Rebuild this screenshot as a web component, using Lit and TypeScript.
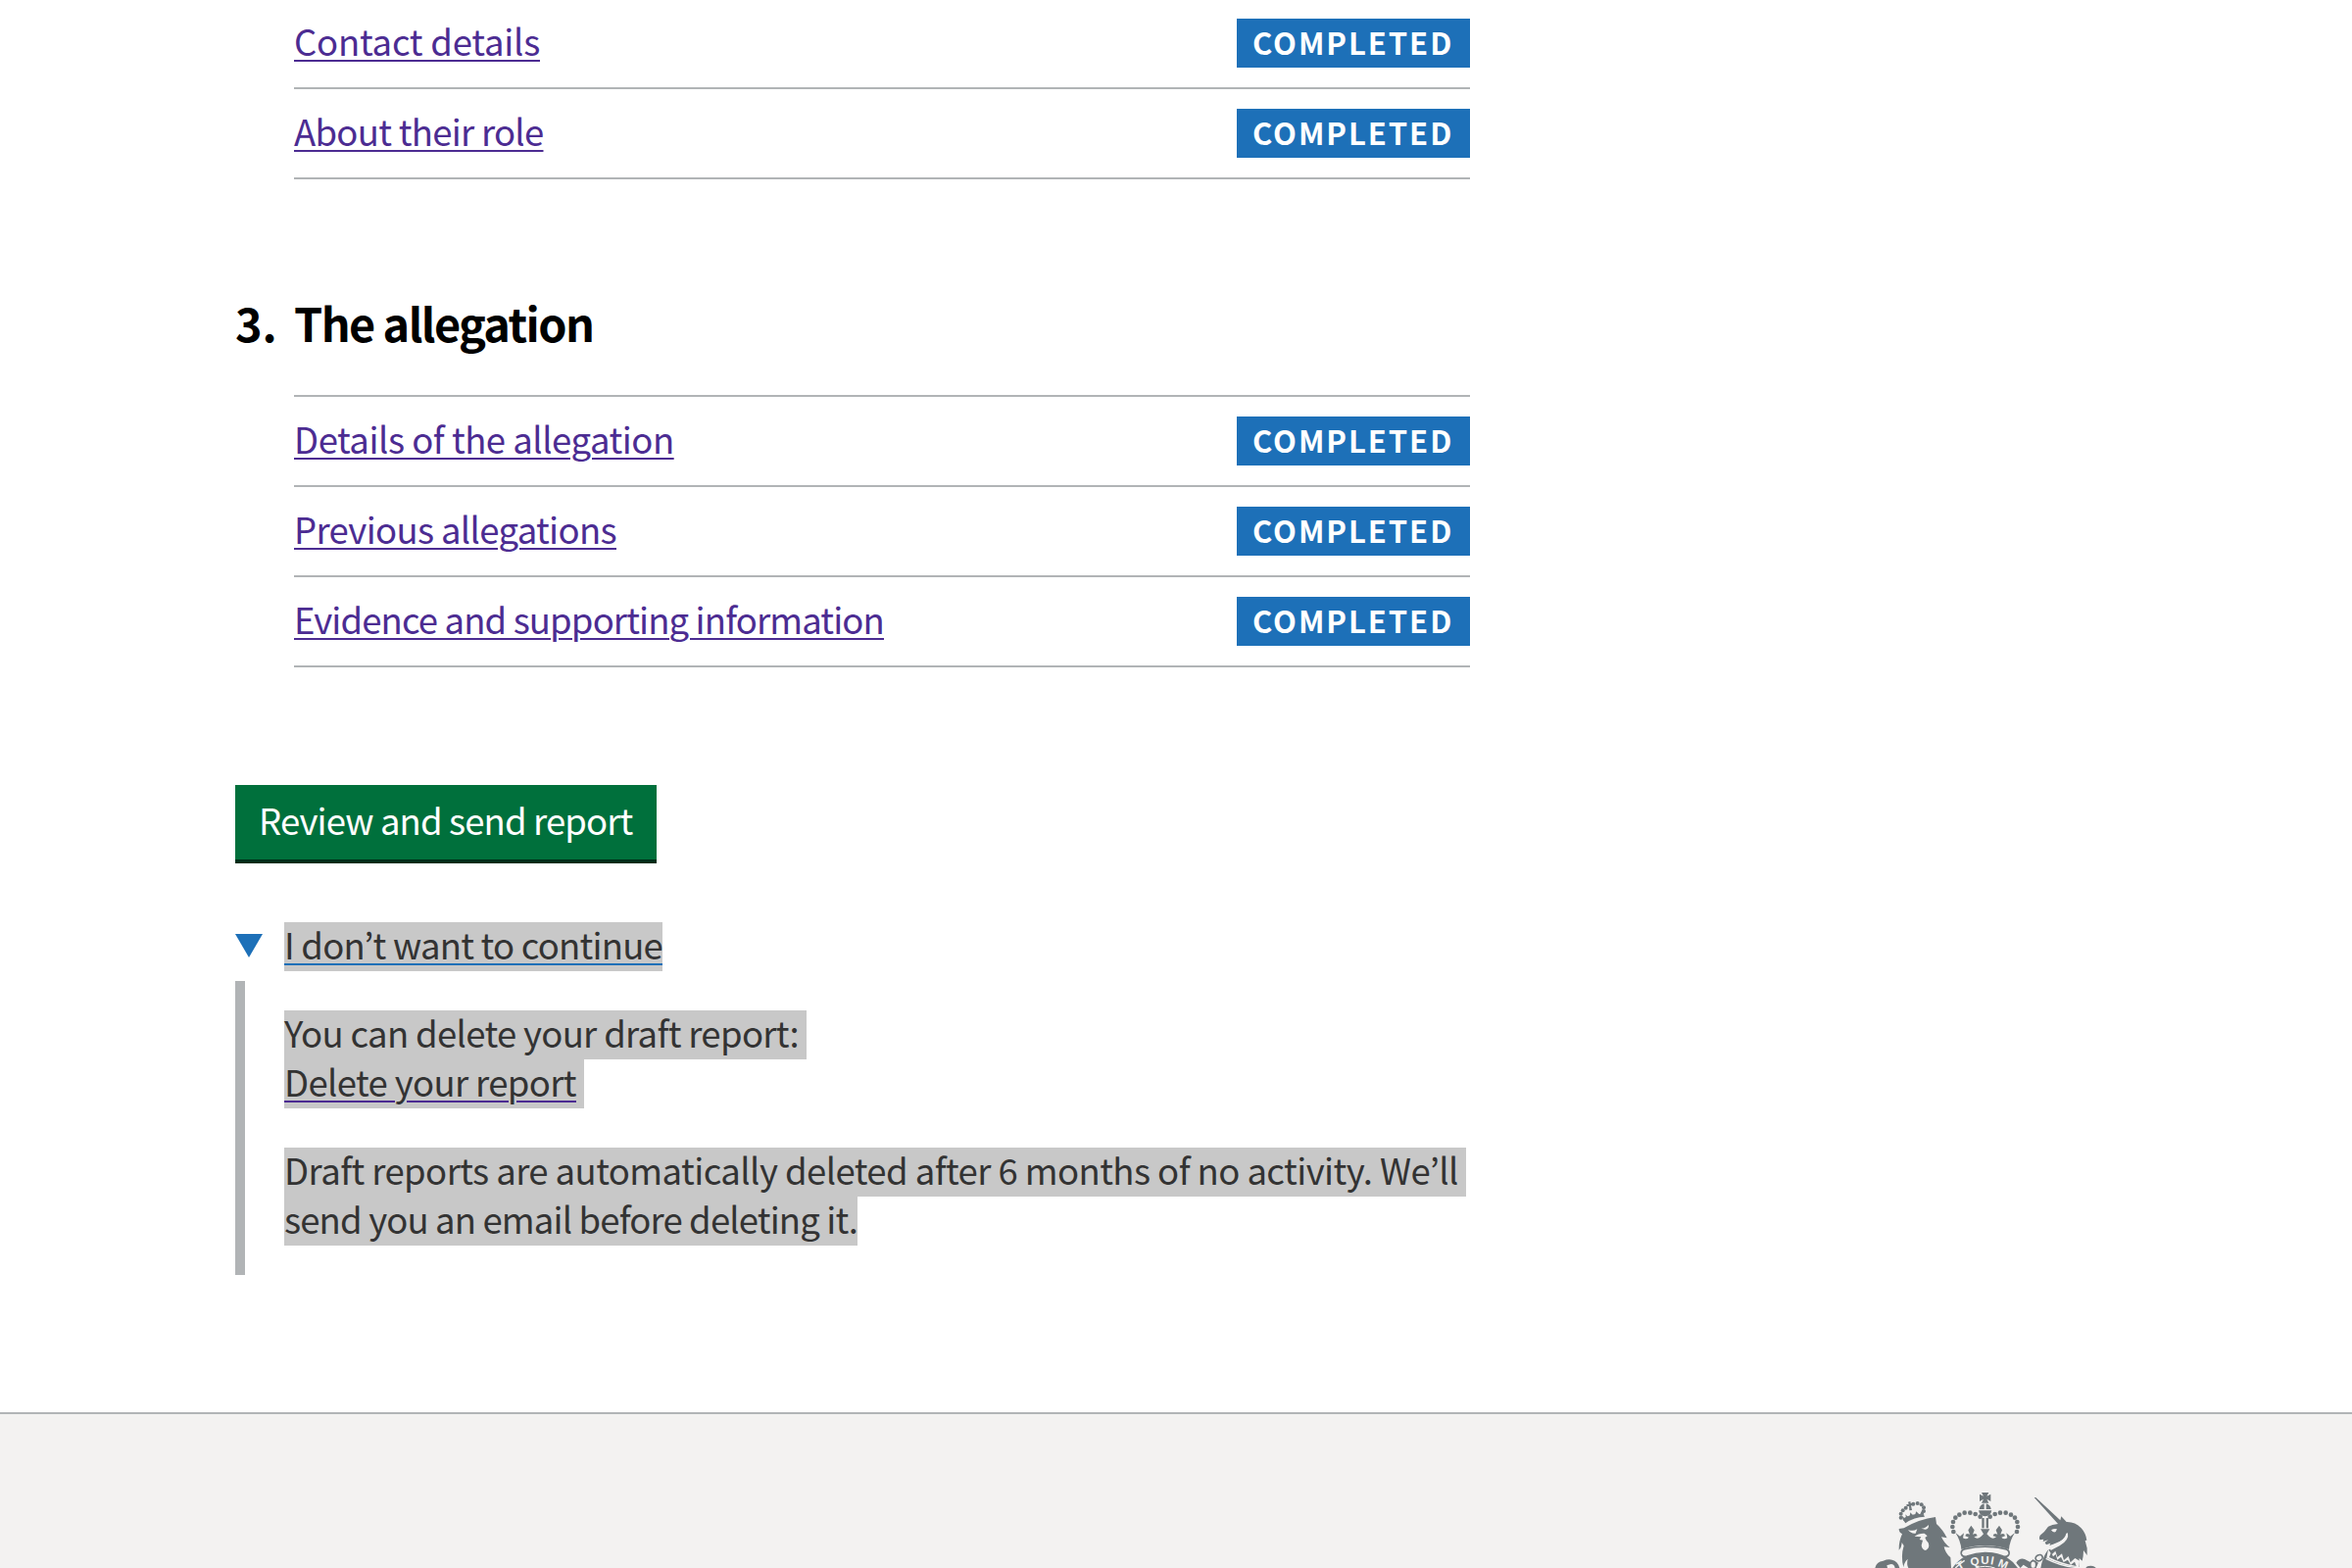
import { LitElement, html, svg, css } from "lit";
import { customElement, property } from "lit/decorators.js";

interface Task {
  label: string;
  tracking: number;
}

const ROLE_TASKS: Task[] = [
  { label: "Contact details", tracking: -0.242 },
  { label: "About their role", tracking: -0.716 },
];

const ALLEGATION_TASKS: Task[] = [
  { label: "Details of the allegation", tracking: -0.481 },
  { label: "Previous allegations", tracking: -0.658 },
  { label: "Evidence and supporting information", tracking: -0.876 },
];

@customElement("task-list")
class TaskList extends LitElement {
  @property({ attribute: false }) tasks: Task[] = [];

  static styles = css`
    :host {
      display: block;
      width: 1200px;
      margin-left: 60px;
    }
    .list {
      list-style: none;
      margin: 0;
      padding: 0;
    }
    .row {
      display: flex;
      justify-content: space-between;
      padding: 20px 0;
      height: 50px;
      border-bottom: 2px solid #b1b4b6;
    }
    .link {
      line-height: 46px;
      color: #4c2c92;
      text-decoration: underline;
      text-decoration-thickness: 2px;
      text-underline-offset: 4px;
      white-space: nowrap;
    }
    .tag {
      box-sizing: border-box;
      width: 238px;
      height: 50px;
      padding-left: 16px;
      background: #1d70b8;
      color: #fff;
      font-size: 31px;
      font-weight: 700;
      line-height: 47px;
      letter-spacing: 1.95px;
      white-space: nowrap;
    }
  `;

  render() {
    return html`<ul class="list">
      ${this.tasks.map(
        (t) => html`<li class="row">
          <a class="link" style="letter-spacing:${t.tracking}px">${t.label}</a>
          <strong class="tag">COMPLETED</strong>
        </li>`
      )}
    </ul>`;
  }
}

const PEARLS = [
  [392, 143], [377, 135], [361, 131], [344, 131], [328, 137],
  [316, 146], [309, 159], [307, 174], [310, 189],
];
const LION_PEARLS = [
  [149, 134], [149, 146], [155, 124], [164, 116], [187, 104], [200, 102], [212, 106], [219, 115], [219, 126],
];

@customElement("royal-arms")
class RoyalArms extends LitElement {
  static styles = css`
    :host {
      display: block;
      width: 270px;
      height: 100px;
    }
    .arms {
      display: block;
    }
    .ink {
      fill: #6f777b;
    }
    .paper {
      fill: #f3f2f1;
    }
    .ink-line {
      fill: none;
      stroke: #6f777b;
    }
    .paper-line {
      fill: none;
      stroke: #f3f2f1;
    }
    .motto {
      fill: #f3f2f1;
      font-family: "Liberation Sans", Arial, sans-serif;
      font-weight: 700;
      font-size: 35px;
    }
  `;

  render() {
    return html`<svg class="arms" width="270" height="100" viewBox="0 0 810 300">
      ${this.lion()} ${this.garter()} ${this.crown()} ${this.unicorn()}
    </svg>`;
  }

  private lion() {
    return svg`
      <g class="ink">
        <path d="M70 300 Q74 280 95 278 Q110 272 122 275 Q140 279 145 300 H131 Q129 288 119 288 L106 292 L108 300Z"/>
        <path d="M143 180 L158 178 Q205 150 255 144 L258 165 Q278 183 290 208 L273 205 Q282 225 299 237 L281 235 Q285 255 301 268 L303 300 H172 Q166 288 170 272 Q158 284 157 298 Q148 265 158 232 L152 222 Q151 238 143 245 Q142 220 153 196 Q143 191 143 180Z"/>
        <path d="M154 150 Q181 132 218 136 L222 143 Q190 143 163 163Z"/>
        <path d="M150 138 L166 153 L163 136 L175 148 L178 130 L190 143 L196 127 L207 137 L215 120 L220 137 Q185 135 158 156Z"/>
        <path d="M173 105 L171 98 L178 96 L179 102 L186 101 L187 109 L180 109 L183 123 L175 124 L174 111 L167 112 L166 105Z"/>
        ${LION_PEARLS.map(([x, y]) => svg`<circle cx=${x} cy=${y} r="6"/>`)}
      </g>
      <g class="paper">
        <path d="M171 183 Q186 189 199 181 L194 194 Q181 196 171 183Z"/>
        <path d="M211 179 Q224 179 234 168 Q235 181 224 182Z"/>
        <path d="M191 203 Q203 193 221 194 L230 202 L223 207 Q226 216 233 223 Q239 239 225 246 Q213 243 212 230 L216 215 L206 213 L211 205Z"/>
      </g>
    `;
  }

  private garter() {
    return svg`
      <path class="ink" d="M307 300 Q342 250 407 250 Q472 250 507 300Z"/>
      <path class="paper-line" stroke-width="4" d="M316 300 Q330 286 344 277"/>
      <path class="ink" d="M502 284 Q512 268 528 273 L545 282 L553 274 L570 284 L562 300 H539 L524 290 L515 300Z"/>
      <text class="motto" x="328" y="308" transform="rotate(-30 328 308)">T</text>
      <text class="motto" x="364" y="294" transform="rotate(-10 364 294)">Q</text>
      <text class="motto" x="394" y="288">U</text>
      <text class="motto" x="422" y="288" transform="rotate(10 422 288)">I</text>
      <text class="motto" x="444" y="294" transform="rotate(22 444 294)">M</text>
      <path class="paper-line" stroke-width="3" d="M377 300 Q407 290 437 300"/>
    `;
  }

  private crown() {
    return svg`
      <g class="ink">
        <path d="M396 69 H418 L412 80 L424 74 V96 L412 89 L418 101 H396 L402 89 L390 96 V74 L402 80Z"/>
        <path d="M389 120 Q391 106 404 103 V120Z"/>
        <path d="M410 103 Q423 106 425 120 H410Z"/>
        <path d="M387 124 H427 Q424 141 407 142 Q390 141 387 124Z"/>
        <path d="M397 147 H404 V178 H397Z"/>
        <path d="M410 147 H417 V178 H410Z"/>
        ${PEARLS.map(([x, y]) => svg`<circle cx=${x} cy=${y} r="7"/><circle cx=${814 - x} cy=${y} r="7"/>`)}
        <path d="M316 192 L330 203 L342 193 L339 208 Q350 214 357 206 L346 202 Q348 192 360 197 L355 184 L364 170 L374 184 L369 197 Q381 191 383 202 L373 205 Q383 214 394 204 L402 196 L393 181 H421 L412 196 L420 204 Q431 214 441 205 L431 202 Q433 192 445 197 L440 184 L450 170 L459 184 L454 197 Q466 191 468 202 L457 206 Q464 214 475 208 L472 193 L484 203 L498 192 Q482 216 480 243 Q407 219 334 243 Q332 216 316 192Z"/>
      </g>
      <path d="M334 257 Q332 245 345 242 Q407 227 469 242 Q482 245 480 257 Q476 268 463 264 Q407 243 351 264 Q338 268 334 257Z" fill="#f3f2f1" stroke="#6f777b" stroke-width="5"/>
      <path class="paper-line" stroke-width="3" d="M390 186 L397 197 L388 205 M424 186 L417 197 L426 205"/>
    `;
  }

  private unicorn() {
    return svg`
      <g class="ink">
        <path d="M557 84 L562 84 L637 154 L640 142 L656 159 Q682 158 701 178 Q715 193 718 215 L713 216 L719 239 L719 261 L708 246 Q708 265 704 278 L695 270 L695 300 H577 Q582 269 598 246 L611 239 Q658 225 658 193 Q651 216 619 226 L604 232 L607 224 L594 229 L590 222 L600 214 L584 219 L586 212 L574 214 Q571 207 575 200 Q590 189 600 173 Q611 167 630 165 Z"/>
        <path d="M715 300 Q718 293 730 293 Q743 294 746 300Z"/>
      </g>
      <path class="paper" d="M609 184 Q618 178 627 181 L623 189 Q615 193 609 184Z"/>
      <path class="paper" d="M603 232 Q650 220 655 194 L660 193 Q665 215 635 232 L608 246Z"/>
      <path class="paper" d="M600 243 L611 259 L622 248 L628 267 L642 256 L648 276 L662 264 L668 283 L682 270 L696 278 L694 298 Q641 293 595 269Z"/>
      <path class="ink" d="M609 252 L615 265 L623 258 L628 275 L639 266 L647 282 L660 275 L669 290 L681 281 L686 294 Q640 286 603 267Z"/>
      <path class="paper-line" stroke-width="4" d="M593 271 Q643 297 696 299"/>
      <ellipse class="ink-line" stroke-width="5" cx="572" cy="269" rx="11" ry="9" transform="rotate(-25 572 269)"/>
      <ellipse cx="554" cy="290" rx="9" ry="12" fill="#f3f2f1" stroke="#6f777b" stroke-width="5"/>
    `;
  }
}

@customElement("app-root")
class AppRoot extends LitElement {
  static styles = css`
    :host {
      display: block;
      width: 2400px;
      height: 1600px;
      overflow: hidden;
      background: #fff;
      color: #0b0c0c;
      font-family: "Noto Sans CJK JP", "Noto Sans", sans-serif;
      font-size: 36.5px;
    }
    .main {
      display: flow-root;
      width: 1260px;
      margin-left: 240px;
      padding-bottom: 140px;
    }
    .continued {
      margin-top: -1px;
    }
    .heading {
      display: flex;
      margin: 121px 0 49px;
      font-size: 46.8px;
      font-weight: 700;
      line-height: 50px;
      letter-spacing: -1.6px;
      color: #000;
    }
    .number {
      width: 60px;
      letter-spacing: 0;
    }
    .ruled {
      border-top: 2px solid #b1b4b6;
    }
    .button {
      display: block;
      box-sizing: border-box;
      width: 430px;
      height: 80px;
      margin: 120px 0 60px;
      padding: 0 0 4px 24px;
      border: 0;
      border-bottom: 4px solid #002d18;
      background: #00703c;
      color: #fff;
      font: inherit;
      line-height: 46px;
      letter-spacing: -0.88px;
      text-align: left;
      white-space: nowrap;
    }
    .summary {
      display: flex;
      gap: 22px;
      margin-bottom: 10px;
    }
    .arrow {
      width: 28px;
      height: 24px;
      margin-top: 12px;
      background: #1d70b8;
      clip-path: polygon(0 0, 100% 0, 50% 100%);
    }
    .selected {
      display: block;
      box-sizing: border-box;
      height: 50px;
      background: #c8c8c8;
      color: #333;
      line-height: 46px;
      white-space: nowrap;
    }
    .toggle {
      width: 386px;
      letter-spacing: -0.786px;
      text-decoration: underline #1d70b8 2px;
      text-underline-offset: 4px;
    }
    .details {
      padding: 30px 0 30px 40px;
      border-left: 10px solid #b1b4b6;
    }
    .para {
      margin: 0;
    }
    .para + .para {
      margin-top: 40px;
    }
    .intro {
      width: 533px;
      letter-spacing: -0.668px;
    }
    .delete {
      width: 306px;
      letter-spacing: -0.626px;
    }
    .delete-link {
      text-decoration: underline #4c2c92 2px;
      text-underline-offset: 4px;
    }
    .drafts {
      width: 1206px;
      letter-spacing: -0.57px;
    }
    .email {
      width: 585px;
      letter-spacing: -0.849px;
    }
    .footer {
      display: flex;
      height: 160px;
      box-sizing: border-box;
      padding: 57px 240px 0 1890px;
      border-top: 2px solid #b1b4b6;
      background: #f3f2f1;
    }
  `;

  render() {
    return html`
      <main class="main">
        <task-list class="continued" .tasks=${ROLE_TASKS}></task-list>
        <h2 class="heading"><span class="number">3.</span><span>The allegation</span></h2>
        <task-list class="ruled" .tasks=${ALLEGATION_TASKS}></task-list>
        <button class="button">Review and send report</button>
        <div class="summary">
          <span class="arrow"></span>
          <span class="selected toggle">I don’t want to continue</span>
        </div>
        <div class="details">
          <p class="para">
            <span class="selected intro">You can delete your draft report:</span>
            <span class="selected delete"><a class="delete-link">Delete your report</a></span>
          </p>
          <p class="para">
            <span class="selected drafts">Draft reports are automatically deleted after 6 months of no activity. We’ll</span>
            <span class="selected email">send you an email before deleting it.</span>
          </p>
        </div>
      </main>
      <footer class="footer"><royal-arms></royal-arms></footer>
    `;
  }
}
